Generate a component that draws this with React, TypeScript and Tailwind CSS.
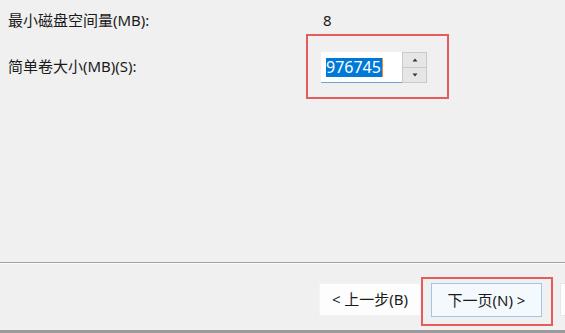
export default function App() {
  return (
    <main className="relative flex h-[333px] w-[565px] flex-col overflow-hidden bg-[#f0f0f0] text-[15px] text-[#1a1a1a] [font-family:'Noto_Sans','Noto_Sans_CJK_SC',sans-serif]">
      <section className="flex-1 pl-2">
        <div className="mt-[10px] grid h-5 grid-cols-[313px_1fr] items-center leading-5">
          <span>最小磁盘空间量(MB):</span>
          <span className="pl-[2px]">8</span>
        </div>

        <div className="mt-[22px] grid grid-cols-[313px_1fr] items-center">
          <span className="-mt-[3px] leading-5">简单卷大小(MB)(S):</span>
          <div className="flex h-[31px]">
            <div className="flex w-[81px] items-center border-b border-[#6aa6dc] bg-white pl-[5px]">
              <span className="h-[19px] border-r border-[#f08a24] bg-[#0078d7] pr-px text-[16px] leading-[19px] text-white">
                976745
              </span>
            </div>
            <div className="flex w-[25px] flex-col border border-[#c9c9c9] bg-[#e6e6e6]">
              <div className="flex flex-1 items-center justify-center border-b border-[#c9c9c9]">
                <svg width="6" height="4" viewBox="0 0 6 4">
                  <path d="M3 0.5 L5.5 3.5 H0.5 Z" fill="#333" />
                </svg>
              </div>
              <div className="flex flex-1 items-center justify-center">
                <svg width="6" height="4" viewBox="0 0 6 4">
                  <path d="M0.5 0.5 H5.5 L3 3.5 Z" fill="#333" />
                </svg>
              </div>
            </div>
          </div>
        </div>
      </section>

      <div className="h-px bg-[#a3a3a3]" />
      <div className="h-px bg-[#fafafa]" />

      <div className="flex h-[66px] gap-[10px] pl-[319px] pt-[19px]">
        <button className="h-[33px] w-[102px] shrink-0 border border-[#f4f4f4] bg-[#fdfdfd] text-[15px]">
          &lt; 上一步(B)
        </button>
        <button className="h-[34px] w-[111px] shrink-0 border border-[#9cc7ec] bg-[#f4f9fd] text-[15px]">
          下一页(N) &gt;
        </button>
        <button className="ml-2 h-[33px] w-[111px] shrink-0 border border-[#e8e8e8] bg-[#fdfdfd]" />
      </div>

      <div className="h-[3px] bg-[#9a9a9a]" />

      <div className="pointer-events-none absolute left-[306px] top-[34px] h-[65px] w-[143px] border-2 border-[#e65b5b]" />
      <div className="pointer-events-none absolute left-[421px] top-[277px] h-[49px] w-[132px] border-2 border-[#e65b5b]" />
    </main>
  );
}
